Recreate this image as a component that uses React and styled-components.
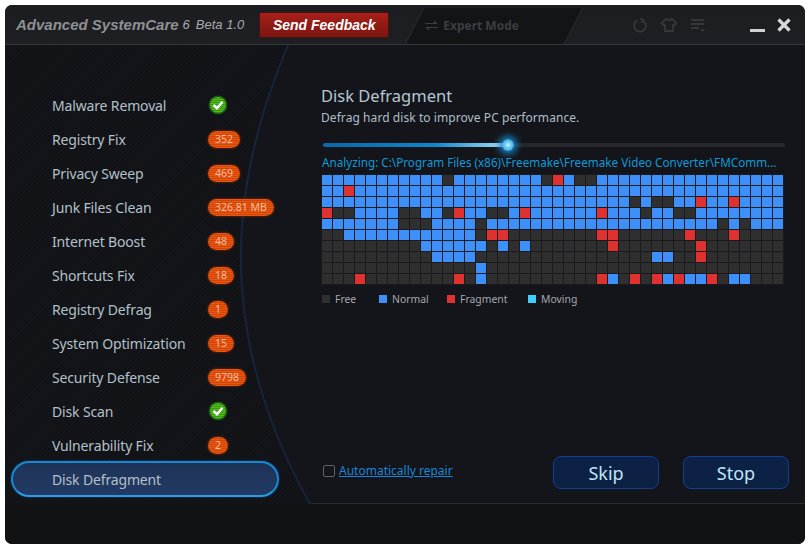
import React from "react";
import styled, { createGlobalStyle } from "styled-components";

const GlobalStyle = createGlobalStyle`
  html, body {
    margin: 0;
    padding: 0;
    background: #fff;
  }
  body {
    font-family: "Noto Sans", "DejaVu Sans", sans-serif;
  }
`;

// Styled Components
const Page = styled.div`
  width: 809px;
  height: 549px;
  padding: 5px 4px 5px 5px;
  box-sizing: border-box;
`;

const Window = styled.div`
  position: relative;
  width: 800px;
  height: 539px;
  display: flex;
  flex-direction: column;
  border-radius: 7px;
  overflow: hidden;
  background: #14151a;
`;

const TitleBar = styled.div`
  height: 39px;
  flex: none;
  display: flex;
  align-items: center;
  background: linear-gradient(#1c1d20, #1e1f22);
  border-bottom: 1px solid #35373a;
  padding-left: 11px;
  overflow: hidden;
`;

const AppName = styled.span`
  font-family: "Liberation Sans", Arial, sans-serif;
  font-weight: bold;
  font-style: italic;
  font-size: 15px;
  color: #8f9193;
  white-space: nowrap;
`;

const Version = styled.span`
  font-family: "Liberation Sans", Arial, sans-serif;
  font-style: italic;
  font-size: 13px;
  color: #a9abad;
  white-space: nowrap;
  margin-left: ${(p) => p.$gap}px;
`;

const FeedbackButton = styled.button`
  width: 130px;
  height: 26px;
  margin-left: 15px;
  padding: 0;
  border: 1px solid #4a1210;
  border-radius: 2px;
  background: linear-gradient(#a82019, #7b1510);
  color: #fff;
  font-family: "Liberation Sans", Arial, sans-serif;
  font-weight: bold;
  font-style: italic;
  font-size: 14px;
`;

const ExpertTab = styled.div`
  position: relative;
  width: 160px;
  height: 36px;
  margin-left: 25px;
  margin-top: 2px;
  flex: none;
  display: flex;
  align-items: center;
  gap: 4px;
  padding-left: 10px;
  box-sizing: border-box;
  color: #3b3e42;
  font-family: "Noto Sans", sans-serif;
  font-weight: bold;
  font-size: 12px;

  &::before {
    content: "";
    position: absolute;
    inset: 0;
    background: #131416;
    border-left: 1px solid #2e3033;
    border-right: 1px solid #2e3033;
    transform: skewX(-27deg);
    z-index: 0;
  }
  & > * {
    position: relative;
    z-index: 1;
  }
`;

const ToolIcons = styled.div`
  display: flex;
  align-items: center;
  gap: 12px;
  margin-left: 58px;
  margin-top: 1px;
`;

const WindowButtons = styled.div`
  display: flex;
  align-items: center;
  gap: 12px;
  margin-left: 44px;
`;

const Main = styled.div`
  position: relative;
  flex: 1;
  display: flex;
`;

const SidebarBackdrop = styled.svg`
  position: absolute;
  left: 0;
  top: 0;
  width: 800px;
  height: 459px;
`;

const Sidebar = styled.div`
  position: relative;
  width: 300px;
  flex: none;
  box-sizing: border-box;
  padding: 43px 0 0 6px;
  display: flex;
  flex-direction: column;
`;

const NavRow = styled.div`
  height: 34px;
  width: 268px;
  box-sizing: border-box;
  padding-left: 41px;
  display: flex;
  align-items: center;
  color: #b3c0c9;
  font-size: 14px;
  letter-spacing: -0.15px;
  white-space: nowrap;
`;

const ActiveRow = styled(NavRow)`
  height: 36px;
  margin-top: -1px;
  border: 2px solid #1b87d0;
  border-bottom-color: #2a9be4;
  border-radius: 18px;
  background: linear-gradient(#1f3358, #223a64);
  box-shadow: 0 0 2px #0e5c9c;
  padding-left: 39px;
`;

const NavLabel = styled.span`
  width: 156px;
  flex: none;
`;

const Badge = styled.span`
  height: 17px;
  padding: 0 7px;
  box-sizing: border-box;
  border-radius: 9px;
  display: inline-flex;
  align-items: center;
  color: #f3bd9f;
  font-family: "Noto Sans", sans-serif;
  font-size: 10.5px;
  letter-spacing: 0;
  background: repeating-linear-gradient(#ea5510 0, #ea5510 1px, #cf4608 1px, #cf4608 2px);
  box-shadow: 0 0 3px #8a2a00;
`;

const Content = styled.div`
  position: relative;
  flex: 1;
  box-sizing: border-box;
  padding: 38px 0 0 16px;
  display: flex;
  flex-direction: column;
`;

const Heading = styled.div`
  color: #b6c6d2;
  font-size: 16.5px;
  line-height: 25px;
`;

const SubHeading = styled.div`
  color: #b0bec8;
  font-size: 12px;
  letter-spacing: 0.07px;
  line-height: 16px;
  margin-top: 2px;
`;

const ProgressTrack = styled.div`
  position: relative;
  width: 462px;
  height: 4px;
  margin: 17px 0 0 2px;
  background: #25272b;
  border-radius: 2px;
`;

const ProgressFill = styled.div`
  height: 100%;
  border-radius: 2px;
  background: linear-gradient(90deg, #0a67a8, #0f86cc 60%, #a8e0f8);
`;

const ProgressKnob = styled.div`
  position: absolute;
  top: -4px;
  width: 12px;
  height: 12px;
  margin-left: -6px;
  border-radius: 50%;
  background: radial-gradient(circle, #c9f0ff 0, #5cc4f2 45%, #1586c9 100%);
  box-shadow: 0 0 7px 3px #1a86cc;
`;

const PathLine = styled.div`
  color: #0f9ad8;
  font-size: 11.7px;
  line-height: 16px;
  margin: 7px 0 0 1px;
  white-space: nowrap;
`;

const Grid = styled.div`
  width: 461px;
  display: grid;
  grid-template-columns: repeat(42, 10px);
  grid-auto-rows: 10px;
  gap: 1px;
  padding: 1px;
  margin-top: 4px;
  background: #1b1b1d;
`;

const Cell = styled.div`
  background: ${(p) => p.$color};
`;

const Legend = styled.div`
  display: flex;
  margin: 6px 0 0 1px;
`;

const LegendItem = styled.div`
  width: ${(p) => p.$w}px;
  display: flex;
  align-items: center;
  gap: 5px;
  color: #a2a9ae;
  font-size: 10.4px;
  line-height: 16px;
`;

const Swatch = styled.span`
  width: 8px;
  height: 8px;
  background: ${(p) => p.$color};
`;

const BottomRow = styled.div`
  position: absolute;
  left: 16px;
  right: 16px;
  top: 411px;
  display: flex;
  align-items: flex-start;
`;

const RepairOption = styled.label`
  display: flex;
  align-items: center;
  gap: 4px;
  margin: 7px 0 0 2px;
  flex: 1;
`;

const CheckBox = styled.span`
  width: 10px;
  height: 10px;
  border: 1px solid #5d6368;
  border-radius: 2px;
`;

const RepairLink = styled.a`
  color: #1a85d6;
  font-size: 12px;
  line-height: 16px;
  text-decoration: underline;
`;

const ActionButton = styled.button`
  width: 106px;
  height: 33px;
  margin-left: ${(p) => p.$gap}px;
  padding: 0;
  border: 1px solid #123f92;
  border-radius: 8px;
  background: linear-gradient(#0d2148, #0b2142);
  color: #bfe6f7;
  font-family: "Noto Sans", sans-serif;
  font-size: 18px;
`;

const Footer = styled.div`
  height: 40px;
  flex: none;
  background: #111214;
  border-top: 1px solid #26282a;
`;

const CheckMark = () => (
  <svg width="20" height="20" viewBox="0 0 20 20">
    <defs>
      <pattern id="ballLines" width="2" height="2" patternUnits="userSpaceOnUse">
        <rect width="2" height="1" fill="#55b81f" />
        <rect y="1" width="2" height="1" fill="#359a14" />
      </pattern>
    </defs>
    <circle cx="10" cy="10" r="9.5" fill="#1b5410" />
    <circle cx="10" cy="10" r="8" fill="url(#ballLines)" />
    <path d="M5.5 10 L9 13.2 L14.5 6.8" fill="none" stroke="#fff" strokeWidth="2.4" />
  </svg>
);

const SwapIcon = () => (
  <svg width="15" height="12" viewBox="0 0 15 12" fill="#3b3e42">
    <path d="M1 3h9V0.5l4 3.5H1zM14 8H5v2.5L1 7h13z" />
  </svg>
);

const RefreshIcon = () => (
  <svg width="16" height="16" viewBox="0 0 16 16" fill="none" stroke="#34383b" strokeWidth="2">
    <path d="M10.5 3.3a6 6 0 1 1-5 0" />
    <path d="M8 1.5l3 1.6-1.6 3" strokeWidth="1.6" />
  </svg>
);

const ShirtIcon = () => (
  <svg width="18" height="16" viewBox="0 0 18 16" fill="none" stroke="#34383b" strokeWidth="1.8">
    <path d="M6 2 L1.5 6 L4.5 9 L5 8.5 V14 H13 V8.5 L13.5 9 L16.5 6 L12 2 Q9 4 6 2Z" />
  </svg>
);

const ListIcon = () => (
  <svg width="16" height="16" viewBox="0 0 16 16" fill="#34383b">
    <rect x="1" y="2" width="13" height="2" />
    <rect x="1" y="6" width="13" height="2" />
    <rect x="1" y="10" width="8" height="2" />
    <path d="M10 12h5l-2.5 3z" />
  </svg>
);

const MinimizeIcon = () => (
  <svg width="15" height="16" viewBox="0 0 15 16">
    <rect y="12" width="15" height="3" fill="#cfd1d3" />
  </svg>
);

const CloseIcon = () => (
  <svg width="14" height="14" viewBox="0 0 14 14" stroke="#d6d8da" strokeWidth="3.2">
    <path d="M1.5 1.5 L12.5 12.5 M12.5 1.5 L1.5 12.5" />
  </svg>
);

const NAV_ITEMS = [
  { label: "Malware Removal", ok: true },
  { label: "Registry Fix", badge: "352" },
  { label: "Privacy Sweep", badge: "469" },
  { label: "Junk Files Clean", badge: "326.81 MB" },
  { label: "Internet Boost", badge: "48" },
  { label: "Shortcuts Fix", badge: "18" },
  { label: "Registry Defrag", badge: "1" },
  { label: "System Optimization", badge: "15" },
  { label: "Security Defense", badge: "9798" },
  { label: "Disk Scan", ok: true },
  { label: "Vulnerability Fix", badge: "2" },
];

const COLORS = { free: "#2f2f2f", normal: "#3d8ffa", fragment: "#e03131", moving: "#3fcdfb" };

const range = (from, to) => Array.from({ length: to - from + 1 }, (_, i) => from + i);

// each row has a base colour and the columns that differ from it
const DISK_ROWS = [
  { base: "normal", free: [11, 20, 23, 24], fragment: [21] },
  { base: "normal", fragment: [2] },
  { base: "normal", free: [28, 30, 31], fragment: [34, 37] },
  { base: "normal", free: [1, 2, 7, 8, 11, 15, 16, 29, 32, 33], fragment: [0, 12, 18, 25] },
  { base: "normal", free: [7, 8, 9, 14, 36, 38] },
  { base: "free", normal: range(2, 13), fragment: [15, 16, 25, 26, 33, 37] },
  { base: "free", normal: [...range(9, 14), 16, 18], fragment: [26, 34] },
  { base: "free", normal: [...range(10, 13), 30, 31], fragment: [34] },
  { base: "free", normal: [14] },
  { base: "free", normal: [14, 26, 31, 33, 34, 37, 38], fragment: [3, 12, 25, 28, 30, 32, 35] },
];

const cellKind = (row, col) => {
  if (row.fragment && row.fragment.includes(col)) return "fragment";
  if (row.free && row.free.includes(col)) return "free";
  if (row.normal && row.normal.includes(col)) return "normal";
  return row.base;
};

export default function App() {
  return (
    <Page>
      <GlobalStyle />
      <Window>
        <TitleBar>
          <AppName>Advanced SystemCare</AppName>
          <Version $gap={4}>6</Version>
          <Version $gap={6}>Beta 1.0</Version>
          <FeedbackButton>Send Feedback</FeedbackButton>
          <ExpertTab>
            <SwapIcon />
            <span>Expert Mode</span>
          </ExpertTab>
          <ToolIcons>
            <RefreshIcon />
            <ShirtIcon />
            <ListIcon />
          </ToolIcons>
          <WindowButtons>
            <MinimizeIcon />
            <CloseIcon />
          </WindowButtons>
        </TitleBar>
        <Main>
          <SidebarBackdrop viewBox="0 0 800 459">
            <defs>
              <pattern id="hatch" width="3" height="3" patternUnits="userSpaceOnUse" patternTransform="rotate(-45)">
                <rect width="3" height="3" fill="#101216" />
                <rect width="3" height="1" fill="#15171c" />
              </pattern>
            </defs>
            <path d="M283 0 C 228 130, 205 280, 305 459 L0 459 L0 0Z" fill="url(#hatch)" />
            <path d="M283 0 C 228 130, 205 280, 305 459" fill="none" stroke="#16243c" strokeWidth="2" />
          </SidebarBackdrop>
          <Sidebar>
            {NAV_ITEMS.map((item) => (
              <NavRow key={item.label}>
                <NavLabel>{item.label}</NavLabel>
                {item.ok ? <CheckMark /> : <Badge>{item.badge}</Badge>}
              </NavRow>
            ))}
            <ActiveRow>Disk Defragment</ActiveRow>
          </Sidebar>
          <Content>
            <Heading>Disk Defragment</Heading>
            <SubHeading>Defrag hard disk to improve PC performance.</SubHeading>
            <ProgressTrack>
              <ProgressFill style={{ width: "40%" }} />
              <ProgressKnob style={{ left: "40%" }} />
            </ProgressTrack>
            <PathLine>Analyzing: C:\Program Files (x86)\Freemake\Freemake Video Converter\FMComm...</PathLine>
            <Grid>
              {DISK_ROWS.flatMap((row, r) =>
                range(0, 41).map((col) => (
                  <Cell key={`${r}-${col}`} $color={COLORS[cellKind(row, col)]} />
                ))
              )}
            </Grid>
            <Legend>
              <LegendItem $w={57}>
                <Swatch $color={COLORS.free} />
                Free
              </LegendItem>
              <LegendItem $w={68}>
                <Swatch $color={COLORS.normal} />
                Normal
              </LegendItem>
              <LegendItem $w={81}>
                <Swatch $color={COLORS.fragment} />
                Fragment
              </LegendItem>
              <LegendItem $w={70}>
                <Swatch $color={COLORS.moving} />
                Moving
              </LegendItem>
            </Legend>
            <BottomRow>
              <RepairOption>
                <CheckBox />
                <RepairLink>Automatically repair</RepairLink>
              </RepairOption>
              <ActionButton>Skip</ActionButton>
              <ActionButton $gap={24}>Stop</ActionButton>
            </BottomRow>
          </Content>
        </Main>
        <Footer />
      </Window>
    </Page>
  );
}
